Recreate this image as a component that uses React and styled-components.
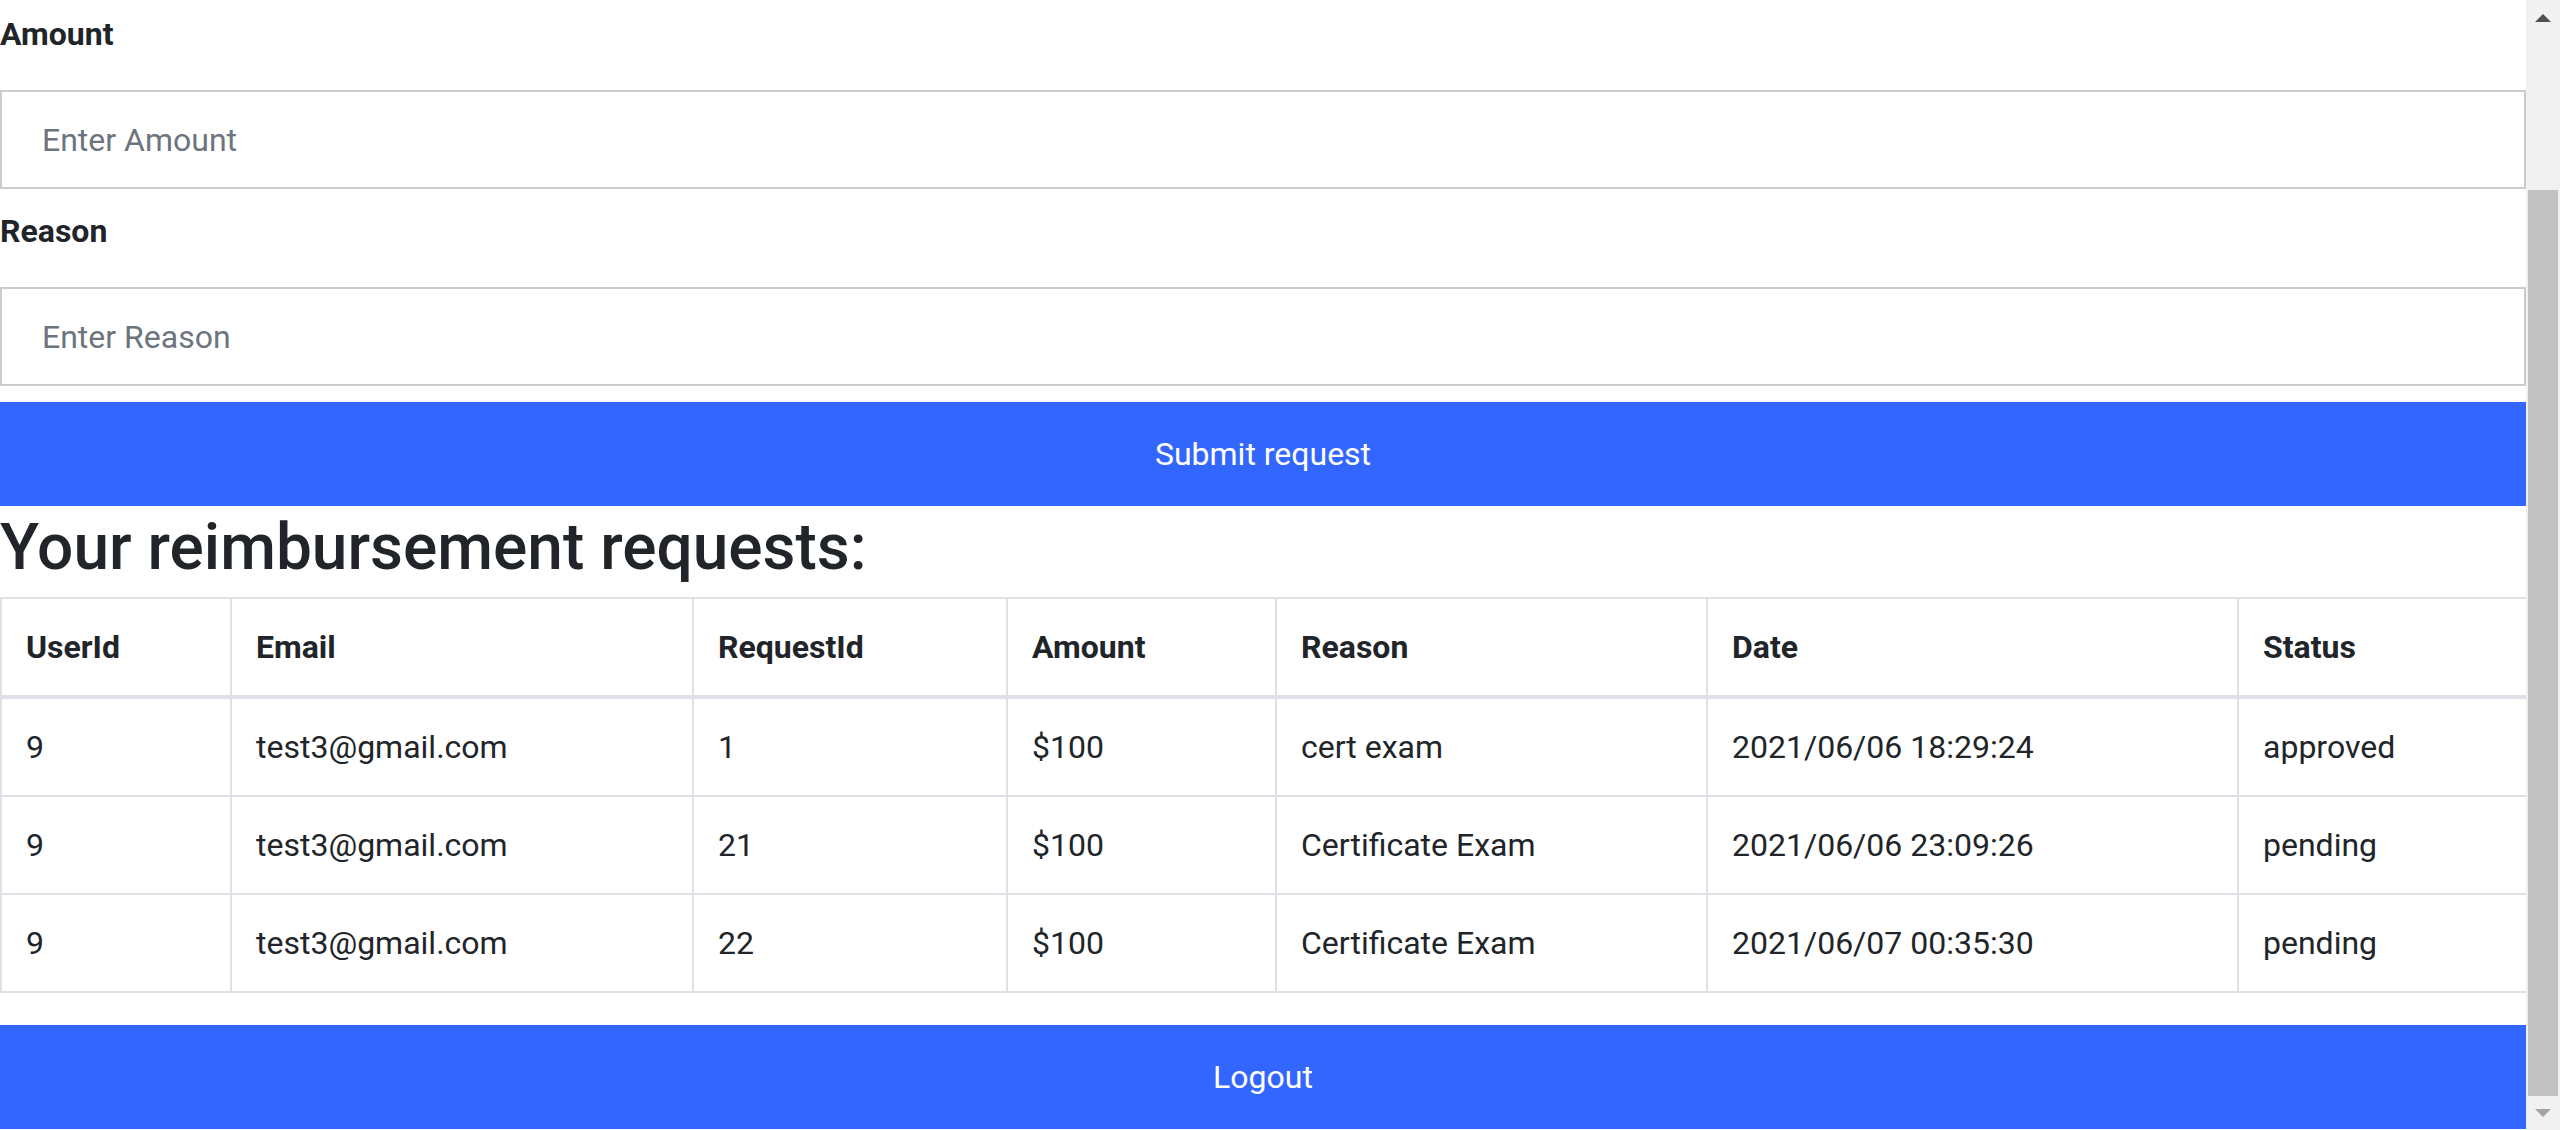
import React from 'react';
import styled, { createGlobalStyle } from 'styled-components';

const GlobalStyle = createGlobalStyle`
    html, body {
        margin: 0;
        padding: 0;
        background-color: #fff;
        overflow: hidden;
    }
    body {
        font-family: Roboto, "Liberation Sans", sans-serif;
        color: #212529;
    }
`;

const Root = styled.div`
    display: flex;
    width: 100%;
    height: 1130px;
    overflow: hidden;
`;

const Page = styled.div`
    flex: 1;
    min-width: 0;
    padding-top: 10px;
`;

const Label = styled.label`
    display: block;
    font-size: 32px;
    font-weight: 700;
    line-height: 48px;
    margin: ${p => (p.first ? '0' : '18px')} 0 32px;
`;

const Input = styled.input`
    display: block;
    box-sizing: border-box;
    width: 100%;
    height: 99px;
    padding: 24px 40px;
    border: 2px solid #cccccc;
    font-family: inherit;
    font-size: 32px;
    line-height: 48px;
    color: #495057;
    outline: none;

    &::placeholder {
        color: #6c757d;
    }
`;

const Button = styled.button`
    display: block;
    width: 100%;
    height: 104px;
    margin-top: ${p => p.gap || 0}px;
    border: none;
    background-color: #3366ff;
    color: #fff;
    font-family: inherit;
    font-size: 32px;
    line-height: 48px;
    cursor: pointer;
`;

const Heading = styled.h2`
    margin: 4px 0 10px;
    font-size: 64px;
    font-weight: 500;
    line-height: 76.8px;
`;

const Table = styled.table`
    width: 100%;
    table-layout: fixed;
    border-collapse: collapse;
    border: 2px solid #dee2e6;
    font-size: 32px;
    line-height: 48px;
`;

const Th = styled.th`
    text-align: left;
    font-weight: 700;
    padding: 24px;
    border: 2px solid #dee2e6;
    border-bottom: 4px solid #dee2e6;
    white-space: nowrap;
`;

const Td = styled.td`
    padding: 24px;
    border: 2px solid #dee2e6;
    white-space: nowrap;
`;

const ScrollTrack = styled.div`
    width: 34px;
    flex-shrink: 0;
    background-color: #f1f1f1;
    display: flex;
    flex-direction: column;
`;

const Arrow = styled.div`
    height: ${p => p.h}px;
    display: flex;
    align-items: center;
    justify-content: center;
`;

const Thumb = styled.div`
    width: 30px;
    height: 906px;
    margin: 154px 0 0 2px;
    background-color: #c1c1c1;
`;

const columns = [
    { key: 'userId', title: 'UserId', width: 230 },
    { key: 'email', title: 'Email', width: 462 },
    { key: 'requestId', title: 'RequestId', width: 314 },
    { key: 'amount', title: 'Amount', width: 269 },
    { key: 'reason', title: 'Reason', width: 431 },
    { key: 'date', title: 'Date', width: 531 },
    { key: 'status', title: 'Status', width: 289 },
];

const requests = [
    { userId: 9, email: 'test3@gmail.com', requestId: 1, amount: '$100', reason: 'cert exam', date: '2021/06/06 18:29:24', status: 'approved' },
    { userId: 9, email: 'test3@gmail.com', requestId: 21, amount: '$100', reason: 'Certificate Exam', date: '2021/06/06 23:09:26', status: 'pending' },
    { userId: 9, email: 'test3@gmail.com', requestId: 22, amount: '$100', reason: 'Certificate Exam', date: '2021/06/07 00:35:30', status: 'pending' },
];

const App = () => (
    <Root>
        <GlobalStyle />
        <Page>
            <Label first>Amount</Label>
            <Input placeholder="Enter Amount" />
            <Label>Reason</Label>
            <Input placeholder="Enter Reason" />
            <Button gap={16}>Submit request</Button>
            <Heading>Your reimbursement requests:</Heading>
            <Table>
                <colgroup>
                    {columns.map(c => <col key={c.key} style={{ width: c.width }} />)}
                </colgroup>
                <thead>
                    <tr>
                        {columns.map(c => <Th key={c.key}>{c.title}</Th>)}
                    </tr>
                </thead>
                <tbody>
                    {requests.map(r => (
                        <tr key={r.requestId}>
                            {columns.map(c => <Td key={c.key}>{r[c.key]}</Td>)}
                        </tr>
                    ))}
                </tbody>
            </Table>
            <Button gap={32}>Logout</Button>
        </Page>
        <ScrollTrack>
            <Arrow h={36}>
                <svg width="16" height="8" viewBox="0 0 16 8"><path d="M0 8 L8 0 L16 8 Z" fill="#505050" /></svg>
            </Arrow>
            <Thumb />
            <Arrow h={34}>
                <svg width="16" height="8" viewBox="0 0 16 8"><path d="M0 0 L8 8 L16 0 Z" fill="#a3a3a3" /></svg>
            </Arrow>
        </ScrollTrack>
    </Root>
);

export default App;
